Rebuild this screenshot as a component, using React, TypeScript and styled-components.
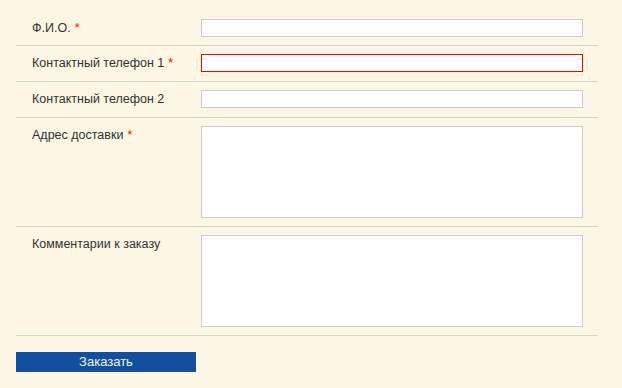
import React from 'react'
import styled, { createGlobalStyle, css } from 'styled-components'

const GlobalStyle = createGlobalStyle`
  html, body {
    margin: 0;
    padding: 0;
    background: #fcf6e5;
  }
  body {
    font-family: 'Liberation Sans', Arial, sans-serif;
    font-size: 12.5px;
    color: #333;
  }
`

type Field = {
  label: string
  required?: boolean
  multiline?: boolean
  error?: boolean
}

const fields: Field[] = [
  { label: 'Ф.И.О.', required: true },
  { label: 'Контактный телефон 1', required: true, error: true },
  { label: 'Контактный телефон 2' },
  { label: 'Адрес доставки', required: true, multiline: true },
  { label: 'Комментарии к заказу', multiline: true },
]

export default function App() {
  return (
    <>
      <GlobalStyle />
      <Form onSubmit={(e) => e.preventDefault()}>
        {fields.map((f) => (
          <Row key={f.label} $multiline={f.multiline}>
            <Label>
              {f.label}
              {f.required && <Star>*</Star>}
            </Label>
            {f.multiline ? <TextArea $error={f.error} /> : <Input type="text" $error={f.error} />}
          </Row>
        ))}
        <Submit type="submit">Заказать</Submit>
      </Form>
    </>
  )
}

const Form = styled.form`
  width: 582px;
  margin-left: 16px;
  padding-top: 11px;
  display: flex;
  flex-direction: column;
`

// single-line rows get one extra pixel below, like the original inline inputs
const Row = styled.div<{ $multiline?: boolean }>`
  display: grid;
  grid-template-columns: 169px 382px;
  align-items: start;
  padding: 8px 0 ${({ $multiline }) => ($multiline ? 8 : 9)}px 16px;
  border-bottom: 1px solid #d8d4ca;

  &:first-child {
    padding-bottom: 8px;
  }
`

const Label = styled.label`
  line-height: 18px;
  color: #333;
`

const Star = styled.span`
  color: #f00;
  margin-left: 4px;
`

const fieldBox = css<{ $error?: boolean }>`
  box-sizing: border-box;
  width: 382px;
  margin: 0;
  padding: 2px 4px;
  background: #fff;
  border: 1px solid ${({ $error }) => ($error ? '#f00' : '#cccccc')};
  font-family: 'Liberation Sans', Arial, sans-serif;
  font-size: 12px;
  outline: none;
  display: block;
`

const Input = styled.input<{ $error?: boolean }>`
  ${fieldBox};
  height: 18px;
`

const TextArea = styled.textarea<{ $error?: boolean }>`
  ${fieldBox};
  height: 92px;
  resize: none;
`

const Submit = styled.button`
  align-self: flex-start;
  margin-top: 16px;
  width: 180px;
  height: 20px;
  padding: 0;
  border: none;
  background: #1150a0;
  color: #f2f5fb;
  font-family: 'Liberation Sans', Arial, sans-serif;
  font-size: 13px;
  line-height: 20px;
  cursor: pointer;
`
